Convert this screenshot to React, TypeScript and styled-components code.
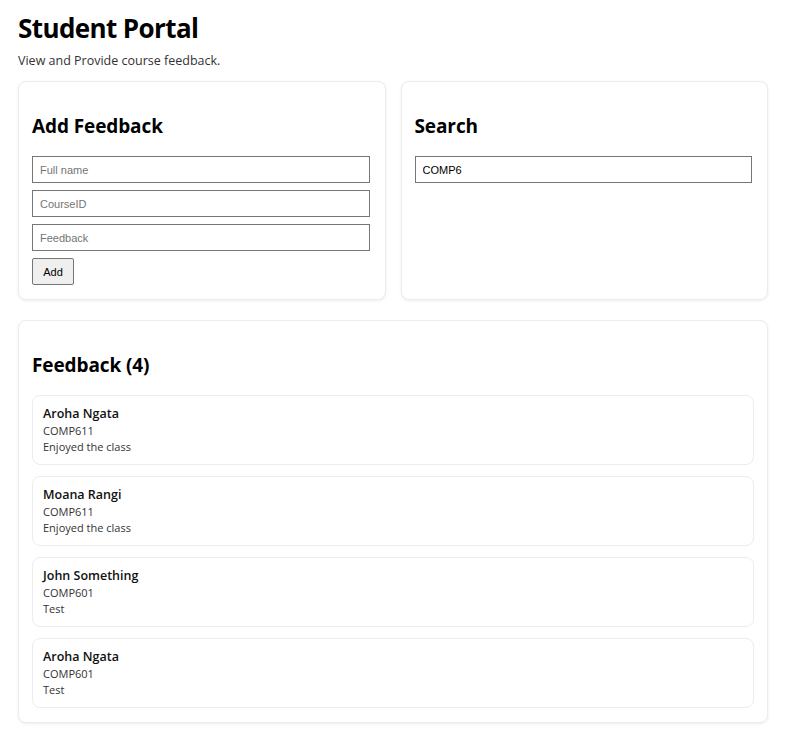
import React from "react";
import styled, { createGlobalStyle } from "styled-components";

const Global = createGlobalStyle`
  html, body { margin: 0; padding: 0; background: #fff; }
  body { font-family: "Open Sans", "Noto Sans", sans-serif; color: #000; }
`;

const Page = styled.div`
  padding: 10px 18px 18px;
`;

const Title = styled.h1`
  font-size: 26px;
  font-weight: 700;
  margin: 0;
  line-height: 36px;
  letter-spacing: -0.6px;
`;

const Subtitle = styled.p`
  font-size: 12.5px;
  color: #333;
  margin: 6px 0 11px;
  line-height: 18px;
`;

const TopGrid = styled.div`
  display: grid;
  grid-template-columns: 1fr 1fr;
  gap: 15px;
  margin-bottom: 20px;
`;

const Card = styled.section`
  border: 1px solid #ececec;
  border-radius: 8px;
  box-shadow: 0 1px 3px rgba(0, 0, 0, 0.07);
  padding: 14px 13px;
  display: flex;
  flex-direction: column;
  gap: 7px;
  background: #fff;
`;

const CardTitle = styled.h2`
  font-size: 19px;
  font-weight: 700;
  line-height: 27px;
  margin: 17px 0 9px;
  letter-spacing: -0.1px;
`;

const Input = styled.input`
  height: 27px;
  box-sizing: border-box;
  margin-right: 2px;
  border: 1px solid #767676;
  padding: 0 7px;
  font-family: "Liberation Sans", Arial, sans-serif;
  font-size: 11px;
  color: #000;
  &::placeholder { color: #757575; }
`;

const Button = styled.button`
  align-self: flex-start;
  height: 27px;
  width: 42px;
  box-sizing: border-box;
  border: 1px solid #767676;
  border-radius: 2px;
  background: #efefef;
  font-family: "Liberation Sans", Arial, sans-serif;
  font-size: 11px;
  color: #000;
  padding: 0;
`;

const List = styled.div`
  display: flex;
  flex-direction: column;
  gap: 11px;
`;

const Item = styled.article`
  border: 1px solid #ececec;
  border-radius: 8px;
  padding: 9px 10px;
  display: flex;
  flex-direction: column;
`;

const Name = styled.div`
  font-size: 12.5px;
  font-weight: 600;
  line-height: 18px;
  color: #111;
`;

const Line = styled.div`
  font-size: 11px;
  line-height: 16px;
  color: #333;
`;

const feedback = [
  { name: "Aroha Ngata", course: "COMP611", text: "Enjoyed the class" },
  { name: "Moana Rangi", course: "COMP611", text: "Enjoyed the class" },
  { name: "John Something", course: "COMP601", text: "Test" },
  { name: "Aroha Ngata", course: "COMP601", text: "Test" },
];

export default function App() {
  return (
    <Page>
      <Global />
      <Title>Student Portal</Title>
      <Subtitle>View and Provide course feedback.</Subtitle>
      <TopGrid>
        <Card>
          <CardTitle>Add Feedback</CardTitle>
          <Input placeholder="Full name" />
          <Input placeholder="CourseID" />
          <Input placeholder="Feedback" />
          <Button>Add</Button>
        </Card>
        <Card>
          <CardTitle>Search</CardTitle>
          <Input defaultValue="COMP6" />
        </Card>
      </TopGrid>
      <Card>
        <CardTitle>Feedback ({feedback.length})</CardTitle>
        <List>
          {feedback.map((f, i) => (
            <Item key={i}>
              <Name>{f.name}</Name>
              <Line>{f.course}</Line>
              <Line>{f.text}</Line>
            </Item>
          ))}
        </List>
      </Card>
    </Page>
  );
}
